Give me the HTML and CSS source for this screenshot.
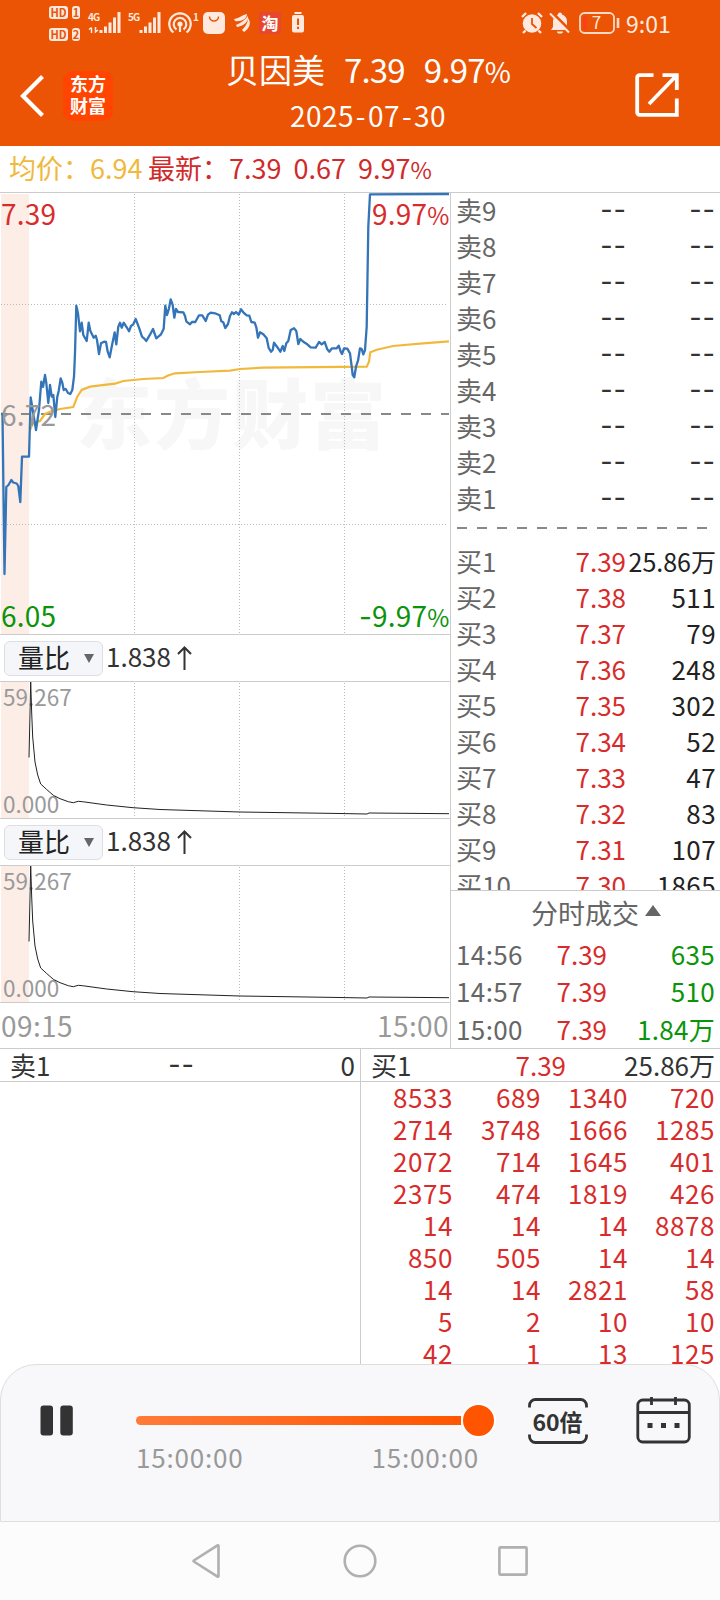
FILE: index.html
```html
<!DOCTYPE html>
<html lang="zh-CN">
<head>
    <meta charset="UTF-8">
    <meta name="viewport" content="width=device-width, initial-scale=1.0">
    <title>贝因美 2025-07-30</title>
    <link rel="stylesheet" href="styles.css">
</head>
<body>
    <header class="header">
        <div class="status">
            <div class="hd">
                <span><b>HD</b><i>1</i></span>
                <span><b>HD</b><i>2</i></span>
            </div>
            <svg class="signal" width="34" height="22" viewBox="0 0 34 22">
                <text x="0" y="9" class="net">4G</text>
                <path d="M3.500 21v-5M1 17.500l2.500-2M7.500 15v5l2.500-2" stroke="#ffe9df" stroke-width="1.500" fill="none"/>
                <path d="M13 21v-3M17.500 21v-6.500M22 21v-10.500M26.500 21V5.500M31 21V0" stroke="#ffe9df" stroke-width="3"/>
            </svg>
            <svg class="signal" width="34" height="22" viewBox="0 0 34 22">
                <text x="0" y="9" class="net">5G</text>
                <path d="M13 21v-3M17.500 21v-6.500M22 21v-10.500M26.500 21V5.500M31 21V0" stroke="#ffe9df" stroke-width="3"/>
            </svg>
            <svg class="hotspot" width="32" height="22" viewBox="0 0 32 22">
                <g fill="none" stroke="#ffe9df" stroke-width="2.200">
                    <path d="M5.500 20.500A10.700 10.700 0 1 1 18.500 20.500"/>
                    <path d="M8.500 17.500A6.300 6.300 0 1 1 15.500 17.500"/>
                </g>
                <circle cx="12" cy="12" r="2.600" fill="#ffe9df"/>
                <path d="M12 12v8" stroke="#ffe9df" stroke-width="2.200"/>
                <text x="25" y="9" class="net">1</text>
            </svg>
            <svg class="bag" width="22" height="22" viewBox="0 0 22 22">
                <rect width="22" height="22" rx="5" fill="#ffe9df"/>
                <path d="M6.500 4.500a4.500 4.500 0 0 0 9 0" fill="none" stroke="#ea5404" stroke-width="1.500"/>
            </svg>
            <svg class="wing" width="18" height="20" viewBox="0 0 18 20">
                <path d="M1 6C7 5 9 2 14 1 14 6 8 9 2 8zM3 12C8 10 12 7 15 3 16 9 10 13 4 14zM9 17C12 14 15 10 15 5 19 10 16 16 11 19z" fill="#ffe9df"/>
            </svg>
            <div class="taobao">淘</div>
            <svg class="lowbat" width="12" height="22" viewBox="0 0 12 22">
                <path d="M2.500 0h7v2h-7zM2 3h8a2 2 0 0 1 2 2v13.500a2 2 0 0 1-2 2H2a2 2 0 0 1-2-2V5a2 2 0 0 1 2-2z" fill="#ffe9df"/>
                <path d="M6 6.500v6.500M6 14.800v2.200" stroke="#ea5404" stroke-width="2"/>
            </svg>
            <svg class="alarm" width="22" height="22" viewBox="0 0 22 22">
                <circle cx="11" cy="11.500" r="9.300" fill="#ffe9df"/>
                <path d="M1 5l4-4M21 5l-4-4M4.500 18.500L2 21M17.500 18.500L20 21" stroke="#ffe9df" stroke-width="2.400"/>
                <path d="M11 6v6l4.500 4" fill="none" stroke="#ea5404" stroke-width="1.800"/>
            </svg>
            <svg class="mute" width="22" height="22" viewBox="0 0 22 22">
                <path d="M11 0.500c1.200 0 2 .8 2 2 3 1 5 3.500 5 7V15l2 3H2l2-3V9.500c0-3.500 2-6 5-7 0-1.200.8-2 2-2zM8 19.500h6a3 2 0 0 1-6 0z" fill="#ffe9df"/>
                <path d="M2.500 0L21.500 19" stroke="#ea5404" stroke-width="3"/>
                <path d="M1 1.500L20 20.500" stroke="#ffe9df" stroke-width="2"/>
            </svg>
            <svg class="battery" width="42" height="22" viewBox="0 0 42 22">
                <rect x="1" y="1" width="34" height="20" rx="4.500" fill="none" stroke="#ffd9c8" stroke-width="1.800"/>
                <path d="M5 4.500h2.500v13H5a1 1 0 0 1-1-1v-11z" fill="#ff3b20"/>
                <path d="M39 6v10" stroke="#ffd9c8" stroke-width="2.600"/>
                <text x="17.500" y="17" class="pct">7</text>
            </svg>
            <span class="clock">9:01</span>
        </div>
        <div class="titlebar">
            <svg class="back" width="25" height="42" viewBox="0 0 25 42">
                <path d="M22.500 1.500L3 21l19.500 19.500" fill="none" stroke="#fff" stroke-width="4.200"/>
            </svg>
            <div class="logo"><span>东方</span><span>财富</span></div>
            <div class="title">
                <div class="name"><span>贝因美</span><span class="num">7.39</span><span class="num">9.97<small>%</small></span></div>
                <div class="date">2025<em>-</em>07<em>-</em>30</div>
            </div>
            <svg class="share" width="44" height="44" viewBox="0 0 44 44">
                <path d="M18.500 2.200H4.500a2.300 2.300 0 0 0-2.300 2.300v35a2.300 2.300 0 0 0 2.300 2.300h37.300V25.500M27.500 2.200h14.300V17M41.500 2.500L14 31" fill="none" stroke="#fff" stroke-width="3.800"/>
            </svg>
        </div>
    </header>

    <div class="info">
        <span class="avg">均价：<span>6.94</span></span>
        <span class="last">最新：<span>7.39</span><span>0.67</span><span>9.97<small>%</small></span></span>
    </div>

    <main class="main">
        <section class="charts">
            <div class="price">
                <svg width="450" height="442" viewBox="0 0 450 442">
                    <rect x="1" y="1" width="28" height="440" fill="#fdede7"/>
                    <text x="76" y="250" class="watermark">东方财富</text>
                    <g class="grid">
                        <path d="M134.500 1V441M239.500 1V441M344.500 1V441M1 111.500H448M1 331.500H448"/>
                    </g>
                    <path d="M1 221H449" stroke="#888" stroke-width="2" stroke-dasharray="10 10"/>
                    <polyline class="avgline" points="30,237 33,230 40,228 45,221 50,218.700 60,216 73.300,214 77.300,203.700 81.700,197 90,193.700 115,190.700 123.300,188 143.300,186 163.300,185 168,182.500 175,180.300 200,179 230,177.700 240,176 263,174.700 366.700,173.700 369,168.700 370.300,159.300 376.700,156.700 393.300,153 420,150.700 449,148.300"/>
                    <polyline class="priceline" points="1,221 2.500,221 4.500,381 6.300,294 8.500,292 11.300,287 13.300,289.500 16.700,290.500 18.300,293 20.300,309 22,263.700 29,263.700 30.700,204.500 32.700,217 36,237 39,217 41.300,188.700 43,194 45,182 46.300,190 48.300,210 50,192 51.700,203.700 53.300,202 55.300,224 57.300,203.700 58.700,198 60.700,185.300 62.300,189.700 63.700,197 65.700,196 68,200 70.300,201 72.300,197 74,183.700 75,160.300 76.300,112.700 78,120.300 80,138.300 81.700,129.700 83.300,142 86.700,148 88.700,129.700 90.300,137.700 93.700,144.700 95.700,142.700 97,147 99,161 101,150.300 104,148.700 106,149 107.700,158.700 109.700,164.300 111.700,153.700 114.700,139.300 116.300,151.300 118.300,133.700 120,129.700 121.700,134.700 123.700,129.700 126.700,134.300 129,138.300 131,133 133.300,131.300 135.700,126 139,134.700 142,143.700 144,145.300 146.300,148 150,141.700 153,136 156.300,145.300 161,141.300 163.700,135.700 165.300,112.700 167,122 169,115.300 170.700,106.300 172.700,112 174.300,124.700 176,116 178,119 183.300,119.300 185,123 186.300,128.300 190,131.300 192,129 195.300,129 199,122.300 202.300,122.300 205.700,128 208,121.700 210.700,119.700 215,120.300 219.700,122.300 221.300,128.300 223.300,129.300 225.300,135 228,131 230,123 232,119.300 234,121 236,119 238.700,121.700 241,116.300 243.300,119.300 246.700,122.300 249.300,122.700 251.300,129 254.700,129.700 256.300,134.300 258,144.700 260,139.300 263.300,141.300 266.700,145.300 268.700,155 271,158.700 272.700,157 274,149.700 277,153.700 280.300,158.700 282.700,153 284.300,158 286.300,150.300 288.300,148 290.700,137 294,135.300 296.300,138 298.300,151 300.300,146 303.300,148.700 307.300,151.300 310.700,154.300 315.700,154.700 319,149 321.700,151.300 324.700,149 327.300,156.300 329.300,158.700 332,155.300 336.700,155.300 338.700,152.700 340.700,158.700 342,161 344,155.300 347.300,155.700 350,160.300 351.700,173.700 352.700,182 354.300,184.300 356,173.700 358,167.700 360,155.300 361.700,156 363.300,161.300 365,157 366.700,133.700 368.300,33.700 370,1.300 449,1"/>
                    <g class="scale">
                        <text x="1" y="32" fill="#d82c2c">7.39</text>
                        <text x="449.500" y="32" fill="#d82c2c" text-anchor="end">9.97<tspan class="percent">%</tspan></text>
                        <text x="1" y="233" fill="#999">6.72</text>
                        <text x="1" y="434" fill="#0a940a">6.05</text>
                        <text x="449.500" y="434" fill="#0a940a" text-anchor="end"><tspan class="minus">-</tspan>9.97<tspan class="percent">%</tspan></text>
                    </g>
                </svg>
            </div>

            <div class="indicator">
                <button class="pick">量比<i></i></button>
                <span>1.838</span>
                <svg width="15" height="24" viewBox="0 0 15 24"><path d="M7.500 24V1.500M1 8l6.500-6.500L14 8" fill="none" stroke="#333" stroke-width="2"/></svg>
            </div>
            <div class="ratio">
                <svg width="450" height="136" viewBox="0 0 450 136">
                    <rect x="1" width="28" height="136" fill="#fdede7"/>
                    <g class="grid"><path d="M134.500 1V135M239.500 1V135M344.500 1V135"/></g>
                    <g class="range">
                        <text x="3" y="24">59.267</text>
                        <text x="3" y="131">0.000</text>
                    </g>
                    <polyline class="ratioline" points="29,75.500 30.700,0 31.700,31 32.700,55 35,80 37.700,93 40.700,102 46.700,107.500 53.300,113.300 60,116.700 68.300,119.700 73.300,120.700 78.300,119.300 83.300,119.800 106.700,123 133,125.700 160,127.500 240,130 340,131.500 367,132 369,131 449,131.700"/>
                </svg>
            </div>

            <div class="indicator">
                <button class="pick">量比<i></i></button>
                <span>1.838</span>
                <svg width="15" height="24" viewBox="0 0 15 24"><path d="M7.500 24V1.500M1 8l6.500-6.500L14 8" fill="none" stroke="#333" stroke-width="2"/></svg>
            </div>
            <div class="ratio">
                <svg width="450" height="136" viewBox="0 0 450 136">
                    <rect x="1" width="28" height="136" fill="#fdede7"/>
                    <g class="grid"><path d="M134.500 1V135M239.500 1V135M344.500 1V135"/></g>
                    <g class="range">
                        <text x="3" y="24">59.267</text>
                        <text x="3" y="131">0.000</text>
                    </g>
                    <polyline class="ratioline" points="29,75.500 30.700,0 31.700,31 32.700,55 35,80 37.700,93 40.700,102 46.700,107.500 53.300,113.300 60,116.700 68.300,119.700 73.300,120.700 78.300,119.300 83.300,119.800 106.700,123 133,125.700 160,127.500 240,130 340,131.500 367,132 369,131 449,131.700"/>
                </svg>
            </div>
            <div class="axis"><span>09:15</span><span>15:00</span></div>
        </section>

        <section class="book">
            <div class="orders">
                <div class="row"><span>卖9</span><em>--</em><em>--</em></div>
                <div class="row"><span>卖8</span><em>--</em><em>--</em></div>
                <div class="row"><span>卖7</span><em>--</em><em>--</em></div>
                <div class="row"><span>卖6</span><em>--</em><em>--</em></div>
                <div class="row"><span>卖5</span><em>--</em><em>--</em></div>
                <div class="row"><span>卖4</span><em>--</em><em>--</em></div>
                <div class="row"><span>卖3</span><em>--</em><em>--</em></div>
                <div class="row"><span>卖2</span><em>--</em><em>--</em></div>
                <div class="row"><span>卖1</span><em>--</em><em>--</em></div>
                <div class="split"></div>
                <div class="row"><span>买1</span><b>7.39</b><i class="big">25.86万</i></div>
                <div class="row"><span>买2</span><b>7.38</b><i>511</i></div>
                <div class="row"><span>买3</span><b>7.37</b><i>79</i></div>
                <div class="row"><span>买4</span><b>7.36</b><i>248</i></div>
                <div class="row"><span>买5</span><b>7.35</b><i>302</i></div>
                <div class="row"><span>买6</span><b>7.34</b><i>52</i></div>
                <div class="row"><span>买7</span><b>7.33</b><i>47</i></div>
                <div class="row"><span>买8</span><b>7.32</b><i>83</i></div>
                <div class="row"><span>买9</span><b>7.31</b><i>107</i></div>
                <div class="row"><span>买10</span><b>7.30</b><i>1865</i></div>
            </div>
            <div class="ticks">
                <div class="ticks-title">分时成交<i></i></div>
                <div class="tick"><span>14:56</span><b>7.39</b><i>635</i></div>
                <div class="tick"><span>14:57</span><b>7.39</b><i>510</i></div>
                <div class="tick"><span>15:00</span><b>7.39</b><i>1.84万</i></div>
            </div>
        </section>
    </main>

    <div class="queues">
        <section class="queue">
            <div class="queue-head"><span>卖1</span><em>--</em><i>0</i></div>
        </section>
        <section class="queue buy">
            <div class="queue-head"><span>买1</span><b>7.39</b><i>25.86万</i></div>
            <div class="lots">
                <span>8533</span><span>689</span><span>1340</span><span>720</span>
                <span>2714</span><span>3748</span><span>1666</span><span>1285</span>
                <span>2072</span><span>714</span><span>1645</span><span>401</span>
                <span>2375</span><span>474</span><span>1819</span><span>426</span>
                <span>14</span><span>14</span><span>14</span><span>8878</span>
                <span>850</span><span>505</span><span>14</span><span>14</span>
                <span>14</span><span>14</span><span>2821</span><span>58</span>
                <span>5</span><span>2</span><span>10</span><span>10</span>
                <span>42</span><span>1</span><span>13</span><span>125</span>
            </div>
        </section>
    </div>

    <div class="player">
        <svg class="pause" width="34" height="31" viewBox="0 0 34 31">
            <rect x="0.500" y="0.500" width="12.500" height="30" rx="3" fill="#333"/>
            <rect x="20.300" y="0.500" width="12.500" height="30" rx="3" fill="#333"/>
        </svg>
        <div class="progress">
            <div class="slider"><div class="track"></div><div class="thumb"></div></div>
            <div class="times"><span>15:00:00</span><span>15:00:00</span></div>
        </div>
        <svg class="speed" width="60" height="46" viewBox="0 0 60 46">
            <path d="M1.500 9.500V7.500a6 6 0 0 1 6-6h45a6 6 0 0 1 6 6v2M1.500 36.500v2a6 6 0 0 0 6 6h45a6 6 0 0 0 6-6v-2" fill="none" stroke="#333" stroke-width="2.800"/>
            <text x="29.500" y="32.500" text-anchor="middle">60倍</text>
        </svg>
        <svg class="calendar" width="56" height="48" viewBox="0 0 56 48">
            <g fill="none" stroke="#333" stroke-width="2.800">
                <rect x="1.800" y="4" width="51.500" height="42" rx="5"/>
                <path d="M2 16.500h51M15.500 1v8M39.500 1v8"/>
            </g>
            <path d="M11.500 27h5v5h-5zM25 27h5v5h-5zM38.500 27h5v5h-5z" fill="#333"/>
        </svg>
    </div>

    <nav class="nav">
        <svg width="30" height="34" viewBox="0 0 30 34"><path d="M26.500 1.800v30.400a.6.6 0 0 1-1 .4L1.800 17.500a.6.6 0 0 1 0-1L25.500 1.400a.6.6 0 0 1 1 .4z"/></svg>
        <svg width="34" height="34" viewBox="0 0 34 34"><circle cx="17" cy="17" r="15.300"/></svg>
        <svg width="30" height="34" viewBox="0 0 30 34"><rect x="1.400" y="3.400" width="27.200" height="27.200" rx="1"/></svg>
    </nav>
</body>
</html>
```

FILE: styles.css
```css
* {
    box-sizing: border-box;
}
body {
    margin: 0;
    width: 720px;
    height: 1600px;
    overflow: hidden;
    display: flex;
    flex-direction: column;
    background: #fff;
    color: #333;
    font-family: "Noto Sans CJK SC", "Noto Sans", sans-serif;
    font-size: 26px;
}
svg {
    display: block;
    flex: none;
    overflow: visible;
}
i, em {
    font-style: normal;
}
b {
    font-weight: normal;
}
small {
    font-size: 0.86em;
}

/* header */
.header {
    height: 146px;
    background: #ea5404;
    color: #fff;
}
.status {
    display: flex;
    align-items: center;
    height: 46px;
    padding-left: 49px;
    color: #ffe9df;
}
.hd {
    display: flex;
    flex-direction: column;
    gap: 9px;
    width: 39px;
}
.hd span {
    display: flex;
    gap: 4px;
}
.hd b, .hd i {
    height: 13px;
    border-radius: 3px;
    background: #ffe9df;
    color: #ea5404;
    font-size: 11px;
    font-weight: bold;
    line-height: 13px;
    text-align: center;
}
.hd b {
    width: 19px;
}
.hd i {
    width: 8px;
}
.net {
    fill: #ffe9df;
    font-size: 10px;
    font-weight: bold;
    letter-spacing: -0.8px;
}
.signal {
    margin-right: 6px;
}
.bag {
    margin-left: 3px;
}
.wing {
    margin-left: 8px;
}
.taobao {
    width: 22px;
    height: 22px;
    margin-left: 8px;
    background: #e8472f;
    color: #fff;
    font-size: 17px;
    font-weight: bold;
    line-height: 21px;
    text-align: center;
}
.lowbat {
    margin-left: 11px;
}
.alarm {
    margin-left: 217px;
}
.mute {
    margin-left: 6px;
}
.battery {
    margin-left: 8px;
}
.pct {
    fill: #ffe9df;
    font-size: 17px;
    text-anchor: middle;
}
.clock {
    margin-left: 5px;
    font-size: 23px;
    line-height: 40px;
}
.titlebar {
    display: flex;
    align-items: center;
    height: 100px;
    padding-left: 20px;
}
.back {
    margin-top: -1px;
}
.logo {
    display: flex;
    flex-direction: column;
    justify-content: center;
    width: 50px;
    height: 50px;
    margin-left: 18px;
    margin-top: -1px;
    padding-bottom: 3px;
    border-radius: 9px;
    background: #ff4500;
    font-size: 18px;
    font-weight: bold;
    line-height: 22px;
    text-align: center;
}
.title {
    width: 494px;
    margin-top: -10px;
    padding-left: 16px;
    text-align: center;
    white-space: nowrap;
}
.name {
    display: flex;
    justify-content: center;
    gap: 19px;
    font-size: 33px;
    line-height: 46px;
}
.num {
    letter-spacing: -0.8px;
}
.date {
    font-size: 28px;
    letter-spacing: 0.4px;
    line-height: 43px;
}
.date em {
    padding: 0 2px;
}
.share {
    margin-left: 28px;
    margin-top: -2px;
}

/* quote line */
.info {
    display: flex;
    height: 46px;
    padding-left: 9px;
    font-size: 27px;
    line-height: 44px;
}
.avg {
    width: 139px;
    color: #f0b93c;
}
.last {
    display: flex;
    color: #d02a2a;
}
.last span + span {
    margin-left: 12px;
}

/* charts */
.main {
    display: flex;
    height: 857px;
    border-top: 1px solid #ccc;
    border-bottom: 1px solid #ccc;
}
.charts {
    width: 451px;
    border-right: 1px solid #ccc;
}
.price {
    height: 442px;
    border-bottom: 1px solid #ccc;
}
.watermark {
    fill: #f7f7f7;
    font-size: 76px;
    font-weight: 900;
    letter-spacing: 2px;
}
.grid path {
    fill: none;
    stroke: #bbb;
    stroke-width: 1;
    stroke-dasharray: 1 2;
}
.avgline {
    fill: none;
    stroke: #f0b93c;
    stroke-width: 2.2;
}
.priceline {
    fill: none;
    stroke: #3474b8;
    stroke-width: 2.3;
    stroke-linejoin: round;
}
.scale {
    font-size: 28px;
    letter-spacing: 0.2px;
}
.percent {
    font-size: 24px;
}
.minus {
    font-family: Inter, sans-serif;
}
.indicator {
    display: flex;
    align-items: center;
    height: 46px;
    padding-left: 4px;
}
.indicator span {
    margin: -5px 6px 0 3px;
    line-height: 40px;
}
.pick {
    display: flex;
    align-items: center;
    justify-content: space-between;
    width: 99px;
    height: 35px;
    padding: 0 8px 3px 13px;
    border: 1px solid #dddfe4;
    border-radius: 6px;
    background: #f5f6f9;
    color: #222;
    font: inherit;
    line-height: 30px;
}
.pick i {
    margin-top: 3px;
    border: 5.5px solid transparent;
    border-top: 9px solid #666;
    border-bottom: 0;
}
.ratio {
    height: 138px;
    border-top: 1px solid #ccc;
    border-bottom: 1px solid #ccc;
}
.range {
    fill: #999;
    font-size: 22.5px;
}
.ratioline {
    fill: none;
    stroke: #222;
    stroke-width: 1;
}
.axis {
    display: flex;
    justify-content: space-between;
    padding: 0 1px;
    color: #999;
    font-size: 28px;
    letter-spacing: 0.4px;
    line-height: 44px;
}

/* order book */
.book {
    flex: 1;
}
.orders {
    height: 698px;
    padding: 0 5px 0 5px;
    overflow: hidden;
    border-bottom: 1px solid #ccc;
}
.row {
    display: flex;
    height: 36px;
    line-height: 34px;
}
.row span {
    width: 64px;
    color: #666;
}
.row b {
    width: 106px;
    color: #d82c2c;
    text-align: right;
}
.row i {
    flex: 1;
    color: #222;
    letter-spacing: 0.4px;
    text-align: right;
}
.row .big {
    font-size: 25px;
    letter-spacing: 0;
    white-space: nowrap;
}
.row em {
    width: 107px;
    text-align: right;
}
.row em + em {
    width: 89px;
}
.row em, .queue-head em {
    color: #333;
    font-family: Inter, sans-serif;
    font-size: 27px;
    letter-spacing: 1px;
}
.split {
    height: 2px;
    margin: 10px 0 15px 1px;
    background: repeating-linear-gradient(90deg, #888 0 10px, transparent 10px 20px);
}
.ticks {
    padding: 2px 6px 0 5px;
}
.ticks-title {
    display: flex;
    justify-content: center;
    align-items: center;
    height: 43px;
    padding: 0 0 3px 21px;
    color: #666;
    font-size: 27px;
    line-height: 38px;
}
.ticks-title i {
    margin: -6px 0 0 6px;
    border: 8px solid transparent;
    border-bottom: 11px solid #666;
    border-top: 0;
}
.tick {
    display: flex;
    height: 37.4px;
    line-height: 36px;
}
.tick span {
    width: 84px;
    color: #666;
    letter-spacing: 0.4px;
}
.tick b {
    width: 67px;
    color: #d82c2c;
    text-align: right;
}
.tick i {
    flex: 1;
    color: #0a940a;
    letter-spacing: 0.3px;
    text-align: right;
}

/* order queues */
.queues {
    display: flex;
    height: 315px;
    overflow: hidden;
}
.queue {
    width: 360px;
}
.buy {
    border-left: 1px solid #ccc;
}
.queue-head {
    display: flex;
    height: 33px;
    padding: 0 5px 0 10px;
    border-bottom: 1px solid #ccc;
    line-height: 32px;
}
.queue-head span {
    width: 60px;
}
.queue-head b {
    width: 135px;
    color: #d82c2c;
    text-align: right;
}
.queue-head em {
    width: 125px;
    text-align: right;
}
.queue-head i {
    flex: 1;
    text-align: right;
}
.lots {
    display: grid;
    grid-template-columns: 92px 88px 87px 87px;
    grid-auto-rows: 32px;
    color: #d82c2c;
    letter-spacing: 0.6px;
    line-height: 30px;
    text-align: right;
}

/* replay player */
.player {
    display: flex;
    height: 158px;
    padding-left: 39px;
    border: 1px solid #dedede;
    border-radius: 36px 36px 0 0;
    background: #f8f8fa;
}
.pause {
    margin-top: 40px;
}
.progress {
    width: 360px;
    margin: 37px 0 0 62px;
}
.slider {
    display: flex;
    align-items: center;
    height: 36px;
}
.track {
    width: 325px;
    height: 9px;
    border-radius: 5px 0 0 5px;
    background: linear-gradient(90deg, #ff7a38, #ff5500);
}
.thumb {
    width: 35px;
    height: 35px;
    border: 2px solid #fff;
    border-radius: 50%;
    background: #ff5500;
}
.times {
    display: flex;
    justify-content: space-between;
    padding: 0 17px 0 0;
    color: #999;
    letter-spacing: 0.8px;
    line-height: 38px;
}
.speed {
    margin: 33px 0 0 32px;
}
.speed text {
    fill: #333;
    font-size: 23px;
    font-weight: bold;
}
.calendar {
    margin: 31px 0 0 48px;
}

/* system navigation */
.nav {
    flex: 1;
    display: flex;
    justify-content: center;
    align-items: center;
    gap: 121px;
    padding-right: 1px;
    background: #fcfcfc;
}
.nav svg {
    fill: none;
    stroke: #b0b0b0;
    stroke-width: 2.6;
}
```
